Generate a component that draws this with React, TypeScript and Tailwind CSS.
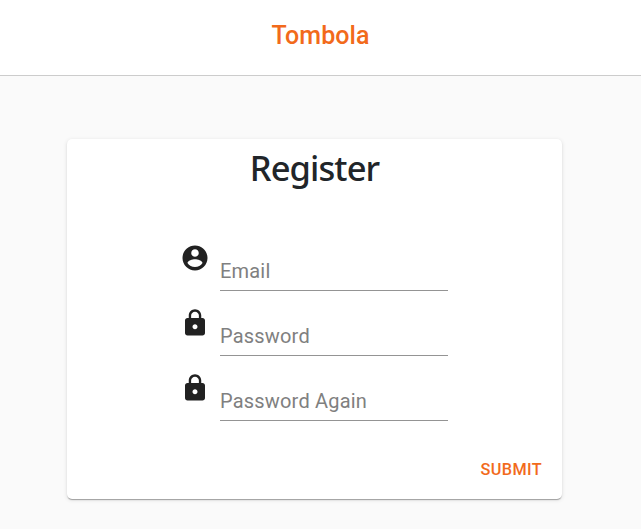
import React from 'react';

const ACCOUNT =
  'M12 2C6.48 2 2 6.48 2 12s4.48 10 10 10 10-4.48 10-10S17.52 2 12 2zm0 3c1.66 0 3 1.34 3 3s-1.34 3-3 3-3-1.34-3-3 1.34-3 3-3zm0 14.2c-2.5 0-4.71-1.28-6-3.22.03-1.99 4-3.08 6-3.08 1.99 0 5.97 1.09 6 3.08-1.29 1.94-3.5 3.22-6 3.22z';
const LOCK =
  'M18 8h-1V6c0-2.76-2.24-5-5-5S7 3.24 7 6v2H6c-1.1 0-2 .9-2 2v10c0 1.1.9 2 2 2h12c1.1 0 2-.9 2-2V10c0-1.1-.9-2-2-2zm-6 9c-1.1 0-2-.9-2-2s.9-2 2-2 2 .9 2 2-.9 2-2 2zm3.1-9H8.9V6c0-1.71 1.39-3.1 3.1-3.1 1.71 0 3.1 1.39 3.1 3.1v2z';

function Field({ icon, label, type }: { icon: string; label: string; type: string }) {
  return (
    <div className="flex h-[65px] items-start gap-2.5">
      <svg viewBox="0 0 24 24" className="size-[30px] shrink-0 fill-[#212121]">
        <path d={icon} />
      </svg>
      <input
        type={type}
        placeholder={label}
        aria-label={label}
        className="mt-[9px] h-[39px] w-[228px] border-b border-[#949494] text-[20px] tracking-[0.19px] text-[#212121] outline-none placeholder:text-[#808080]"
      />
    </div>
  );
}

export default function App() {
  return (
    <div className="flex h-[529px] w-full flex-col overflow-hidden bg-[#fafafa] font-['Roboto',sans-serif]">
      <header className="flex h-[76px] shrink-0 justify-center border-b border-[#cccccc] bg-white pt-[17px]">
        <h1 className="text-[25px] leading-[38px] font-medium tracking-[0.05px] text-[#f26a1b]">Tombola</h1>
      </header>
      <form className="mt-[63px] ml-[67px] flex h-[360px] w-[495px] shrink-0 flex-col rounded-[5px] bg-white shadow-[0_2px_1px_-1px_rgba(0,0,0,0.2),0_1px_1px_0_rgba(0,0,0,0.14),0_1px_4px_0_rgba(0,0,0,0.12)]">
        <h2 className="mt-[7px] text-center font-['Noto_Sans',sans-serif] text-[34.5px] leading-[44px] font-medium tracking-[-0.9px] text-[#212529]">
          Register
        </h2>
        <div className="mt-[53px] ml-[113px] flex flex-col">
          <Field icon={ACCOUNT} label="Email" type="email" />
          <Field icon={LOCK} label="Password" type="password" />
          <Field icon={LOCK} label="Password Again" type="password" />
        </div>
        <div className="mt-[20px] flex justify-end pr-[20px]">
          <button type="button" className="text-[16.25px] leading-[24px] font-medium tracking-[0.36px] text-[#f26a1b]">
            SUBMIT
          </button>
        </div>
      </form>
    </div>
  );
}
